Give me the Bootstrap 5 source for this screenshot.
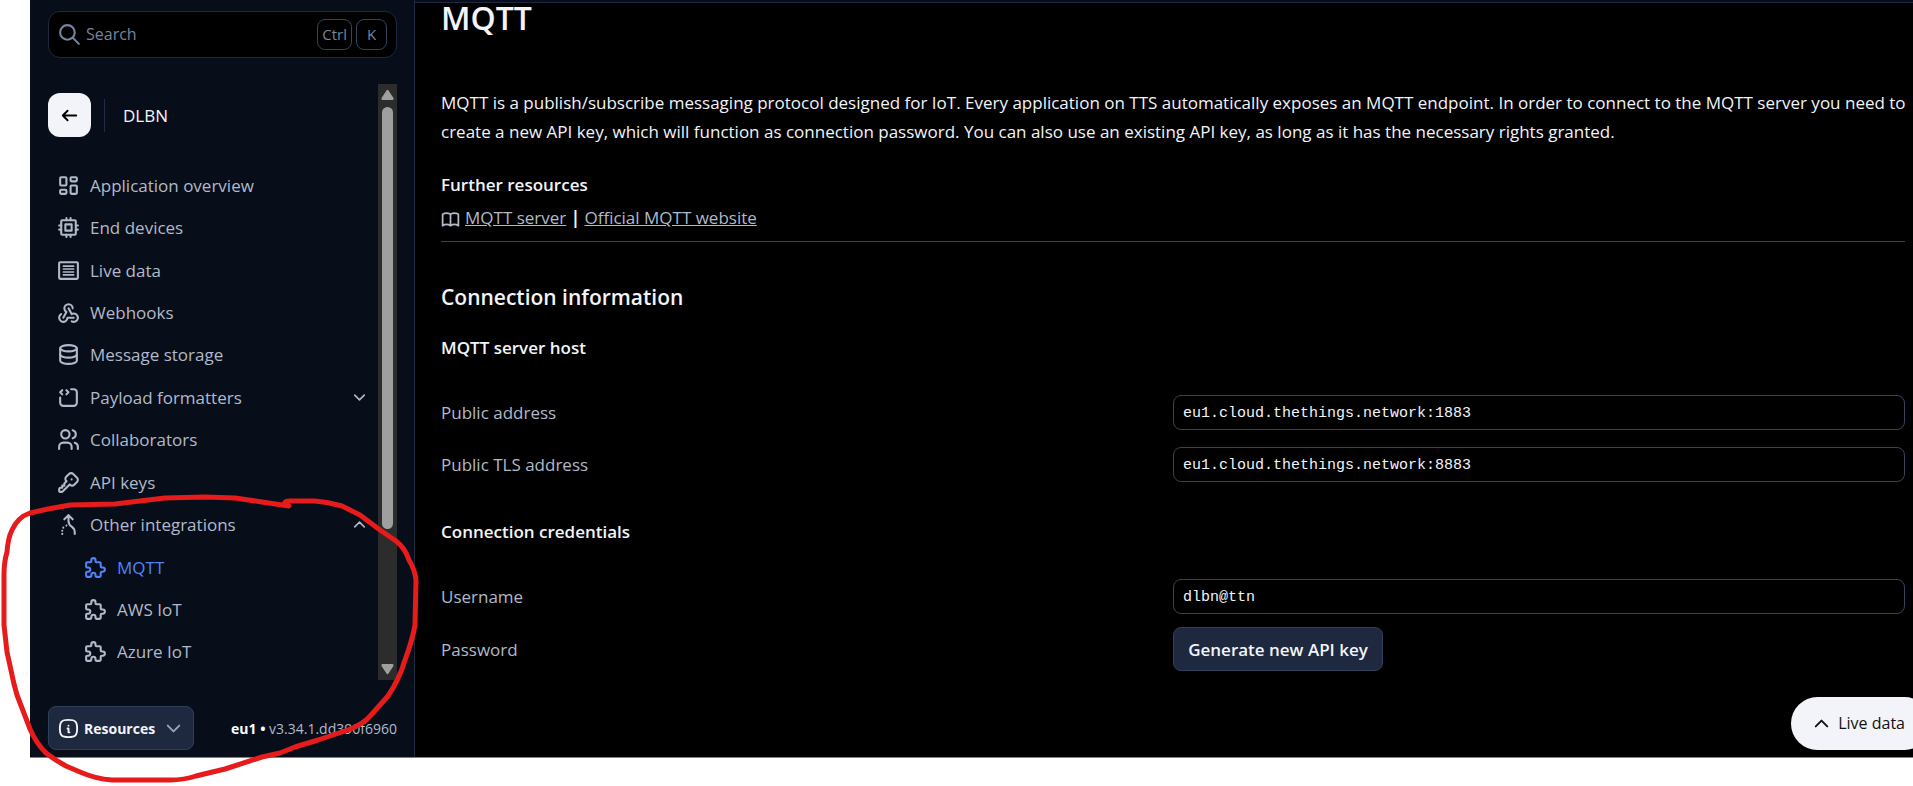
<!DOCTYPE html>
<html lang="en">
<head>
<meta charset="utf-8">
<meta name="viewport" content="width=device-width, initial-scale=1">
<title>MQTT - The Things Stack</title>
<link href="https://cdn.jsdelivr.net/npm/bootstrap@5.3.0/dist/css/bootstrap.min.css" rel="stylesheet">
<style>
  :root { --line: #1e293f; --line-strong: #33435c; --panel: #080e19; --soft: #b1b9ca; --bright: #f2f4f9; }
  body { font-family: "Open Sans", "Noto Sans", sans-serif; font-size: 17px; line-height: 29px; background: #fff; color: var(--bright); overflow-x: hidden; }
  svg { fill: none; stroke: currentColor; stroke-width: 2; stroke-linecap: round; stroke-linejoin: round; flex: none; }
  .ic { width: 25px; height: 25px; }
  .ic-sm { width: 19px; height: 19px; }
  .ic-md { width: 23px; height: 23px; }
  .frame { margin-left: 30px; height: calc(100vh - 28px); background: #000; border-bottom: 1px solid #808080; }
  .side { width: 385px; background: var(--panel); border-right: 1px solid var(--line); padding: 11px 17px 7px 18px; }
  .search { height: 47px; background: #000; border: 1px solid var(--line); border-radius: 12px; padding: 0 9px 0 8px; color: #76849f; }
  .search input { background: none; border: 0; outline: 0; color: inherit; padding: 0; font-size: 16px; min-width: 0; }
  .search input::placeholder { color: inherit; opacity: 1; }
  .search kbd { background: none; border: 1px solid var(--line-strong); border-radius: 8px; height: 31px; min-width: 31px; padding: 0 4px; font: 15px/29px "Open Sans", sans-serif; color: inherit; text-align: center; }
  .scroller { margin: 26px 0; }
  .back { width: 43px; height: 44px; border: 0; border-radius: 12px; background: var(--bright); color: #000; }
  .rule { width: 1px; height: 33px; background: #222c48; margin: 0 18px 0 13px; }
  .crumb { padding-top: 9px; margin-bottom: 27px; }
  .track { width: 19px; background: #2c2c2c; color: #9f9f9f; padding: 5px 0; }
  .track svg { width: 13px; height: 11px; stroke: none; fill: currentColor; }
  .thumb { width: 11px; border-radius: 6px; background: #9f9f9f; margin-top: 7px; height: 72%; }
  .menu { padding: 0 0 7px 8px; }
  .menu ul { padding: 0; margin: 0; list-style: none; }
  .menu li { flex: 1 1 0; }
  .menu li.group { flex-grow: 4; }
  .menu a { flex: 1 1 0; color: var(--soft); text-decoration: none; gap: 9px; padding-right: 9px; }
  .menu .group ul { flex: 3 1 0; padding-left: 27px; }
  .menu a.active { color: #4f83fb; }
  .solid { height: 44px; background: #1e293f; border: 1px solid #2f405c; border-radius: 8px; color: var(--bright); font-weight: 600; }
  .res { width: 146px; padding: 0 8px; font-size: 14px; font-weight: 700; }
  .ver { font-size: 14px; color: var(--soft); }
  .ver b { color: #fff; font-weight: 700; }
  .topbar { height: 3px; background: var(--panel); border-bottom: 1px solid var(--line); }
  .body-pad { padding: 0 8px 0 26px; }
  h1 { font-size: 32px; line-height: 30px; font-weight: 600; margin: 0 0 55px; }
  h2 { font-size: 21px; line-height: 28px; font-weight: 600; margin: 41px 0 22px; }
  h3 { font-size: 17px; line-height: 29px; font-weight: 600; margin: 0; }
  .intro { margin: 0 -8px 24px 0; }
  .links { margin-top: 4px; padding-bottom: 9px; border-bottom: 1px solid var(--line-strong); }
  .links a, .fields label, .fields .name { color: var(--soft); }
  .links .ic-sm { width: 21px; height: 21px; margin: 0 4px 0 -1px; }
  .fields { margin: 33px 0 35px; }
  .fields .row + .row { margin-top: 17px; }
  .fields .row.tight { margin-top: 13px; }
  .copy { width: 100%; height: 35px; background: #000; border: 1px solid var(--line-strong); border-radius: 8px; color: var(--bright); padding: 2px 9px 0; font: 15px "Liberation Mono", monospace; }
  .gen { width: 210px; }
  .live { right: -18px; bottom: 7px; height: 53px; border: 0; border-radius: 27px; background: var(--bright); color: #111; padding: 0 26px 0 19px; gap: 5px; font-size: 16px; }
  .pen { left: 0; top: 0; color: #e61b1b; pointer-events: none; }
</style>
</head>
<body>
<div class="frame d-flex position-relative">
  <aside class="side d-flex flex-column flex-shrink-0">
    <div class="search d-flex align-items-center">
      <svg class="ic" viewBox="0 0 24 24"><circle cx="10" cy="10" r="7"/><path d="M21 21l-6-6"/></svg>
      <input class="flex-grow-1 ms-1" type="text" placeholder="Search" aria-label="Search">
      <kbd>Ctrl</kbd><kbd class="ms-1">K</kbd>
    </div>

    <div class="scroller d-flex flex-grow-1">
      <div class="d-flex flex-column flex-grow-1">
        <div class="crumb d-flex align-items-center">
          <button class="back d-flex align-items-center justify-content-center p-0" type="button" aria-label="Back">
            <svg class="ic-md" viewBox="0 0 24 24"><path d="M5 12h14M5 12l5 5M5 12l5-5"/></svg>
          </button>
          <span class="rule"></span><span>DLBN</span>
        </div>
        <nav class="menu d-flex flex-grow-1">
          <ul class="d-flex flex-column flex-grow-1">
            <li class="d-flex"><a class="d-flex align-items-center" href="#"><svg class="ic" viewBox="0 0 24 24"><rect x="4" y="4" width="6" height="8" rx="1"/><rect x="4" y="16" width="6" height="4" rx="1"/><rect x="14" y="12" width="6" height="8" rx="1"/><rect x="14" y="4" width="6" height="4" rx="1"/></svg>Application overview</a></li>
            <li class="d-flex"><a class="d-flex align-items-center" href="#"><svg class="ic" viewBox="0 0 24 24"><rect x="5" y="5" width="14" height="14" rx="1"/><path d="M9 9h6v6H9zM3 10h2M3 14h2M10 3v2M14 3v2M21 10h-2M21 14h-2M14 21v-2M10 21v-2"/></svg>End devices</a></li>
            <li class="d-flex"><a class="d-flex align-items-center" href="#"><svg class="ic" viewBox="0 0 24 24"><rect x="3" y="4" width="18" height="16" rx="1"/><path d="M7 7.800h10M7 10.600h10M7 13.400h10M7 16.200h10" stroke-width="1.500"/></svg>Live data</a></li>
            <li class="d-flex"><a class="d-flex align-items-center" href="#"><svg class="ic" viewBox="0 0 24 24"><path d="M4.876 13.610a4 4 0 1 0 6.124 3.390h6"/><path d="M15.066 20.502a4 4 0 1 0 1.934-7.502c-.706 0-1.424.179-2 .5l-3-5.500"/><path d="M16 8a4 4 0 1 0-8 0c0 1.506.770 2.818 2 3.500l-3 5.500"/></svg>Webhooks</a></li>
            <li class="d-flex"><a class="d-flex align-items-center" href="#"><svg class="ic" viewBox="0 0 24 24"><ellipse cx="12" cy="6" rx="8" ry="3"/><path d="M4 6v6a8 3 0 0 0 16 0V6"/><path d="M4 12v6a8 3 0 0 0 16 0v-6"/></svg>Message storage</a></li>
            <li class="d-flex"><a class="d-flex align-items-center" href="#"><svg class="ic" viewBox="0 0 24 24"><path d="M14.500 4h2.500a3 3 0 0 1 3 3v10a3 3 0 0 1-3 3H7a3 3 0 0 1-3-3v-5"/><path d="M6 5L4 7l2 2M10 9l2-2l-2-2"/></svg>Payload formatters<svg class="ic-sm ms-auto" viewBox="0 0 24 24"><path d="M6 9l6 6l6-6"/></svg></a></li>
            <li class="d-flex"><a class="d-flex align-items-center" href="#"><svg class="ic" viewBox="0 0 24 24"><circle cx="9" cy="7" r="4"/><path d="M3 21v-2a4 4 0 0 1 4-4h4a4 4 0 0 1 4 4v2M16 3.130a4 4 0 0 1 0 7.750M21 21v-2a4 4 0 0 0-3-3.850"/></svg>Collaborators</a></li>
            <li class="d-flex"><a class="d-flex align-items-center" href="#"><svg class="ic" viewBox="0 0 24 24"><path d="M16.555 3.843l3.602 3.602a2.877 2.877 0 0 1 0 4.069l-2.643 2.643a2.877 2.877 0 0 1-4.069 0l-.301-.301l-6.558 6.558a2 2 0 0 1-1.239.578l-.175.008H4a1 1 0 0 1-.993-.883L3 20v-1.172a2 2 0 0 1 .467-1.284l.119-.130L4 17h2v-2h2v-2l2.144-2.144l-.301-.301a2.877 2.877 0 0 1 0-4.069l2.643-2.643a2.877 2.877 0 0 1 4.069 0zM15 9h.01"/></svg>API keys</a></li>
            <li class="group d-flex flex-column">
              <a class="d-flex align-items-center" href="#"><svg class="ic" viewBox="0 0 24 24"><path d="M16 7l-4-4l-4 4M6 21v.01M6 18.010v.01M7 15.020v.01M10 13.030v.01M12 3v5.394a6.737 6.737 0 0 0 3 5.606a6.737 6.737 0 0 1 3 5.606V21"/></svg>Other integrations<svg class="ic-sm ms-auto" viewBox="0 0 24 24"><path d="M6 15l6-6l6 6"/></svg></a>
              <ul class="d-flex flex-column">
                <li class="d-flex"><a class="active d-flex align-items-center" href="#"><svg class="ic" viewBox="0 0 24 24"><path id="puzzle" d="M4 7h3a1 1 0 0 0 1-1V5a2 2 0 0 1 4 0v1a1 1 0 0 0 1 1h3a1 1 0 0 1 1 1v3a1 1 0 0 0 1 1h1a2 2 0 0 1 0 4h-1a1 1 0 0 0-1 1v3a1 1 0 0 1-1 1h-3a1 1 0 0 1-1-1v-1a2 2 0 0 0-4 0v1a1 1 0 0 1-1 1H4a1 1 0 0 1-1-1v-3a1 1 0 0 1 1-1h1a2 2 0 0 0 0-4H4a1 1 0 0 1-1-1V8a1 1 0 0 1 1-1"/></svg>MQTT</a></li>
                <li class="d-flex"><a class="d-flex align-items-center" href="#"><svg class="ic" viewBox="0 0 24 24"><use href="#puzzle"/></svg>AWS IoT</a></li>
                <li class="d-flex"><a class="d-flex align-items-center" href="#"><svg class="ic" viewBox="0 0 24 24"><use href="#puzzle"/></svg>Azure IoT</a></li>
              </ul>
            </li>
          </ul>
        </nav>
      </div>
      <div class="track d-flex flex-column align-items-center" aria-hidden="true">
        <svg viewBox="0 0 13 11"><path d="M5.500 1.500q1-1.500 2 0L12.500 9q.5 2-1 2h-10q-1.500 0-1-2z"/></svg>
        <div class="thumb"></div>
        <svg class="mt-auto" viewBox="0 0 13 11"><path d="M5.500 9.500q1 1.500 2 0L12.500 2q.5-2-1-2h-10Q0 0 .5 2z"/></svg>
      </div>
    </div>

    <div class="d-flex align-items-center justify-content-between">
      <button class="solid res d-flex align-items-center" type="button">
        <svg class="ic-md" viewBox="0 0 24 24"><path d="M12 9h.01M11 12h1v4h1M12 3c7.200 0 9 1.800 9 9s-1.800 9-9 9s-9-1.800-9-9s1.800-9 9-9z"/></svg>
        <span class="ms-1">Resources</span>
        <svg class="ic-md ms-auto" viewBox="0 0 24 24" opacity=".6"><path d="M6 9l6 6l6-6"/></svg>
      </button>
      <span class="ver"><b>eu1 •</b> v3.34.1.dd390f6960</span>
    </div>
  </aside>

  <div class="flex-grow-1 position-relative">
    <div class="topbar"></div>
    <main class="body-pad">
      <h1>MQTT</h1>
      <p class="intro">MQTT is a publish/subscribe messaging protocol designed for IoT. Every application on TTS automatically exposes an MQTT endpoint. In order to connect to the MQTT server you need to create a new API key, which will function as connection password. You can also use an existing API key, as long as it has the necessary rights granted.</p>
      <h3>Further resources</h3>
      <div class="links">
        <svg class="ic-sm" viewBox="0 0 24 24" color="#b1b9ca"><path d="M3 19a9 9 0 0 1 9 0a9 9 0 0 1 9 0M3 6a9 9 0 0 1 9 0a9 9 0 0 1 9 0M3 6v13M12 6v13M21 6v13"/></svg><a href="#">MQTT server</a> <b>|</b> <a href="#">Official MQTT website</a>
      </div>

      <h2>Connection information</h2>
      <h3>MQTT server host</h3>
      <div class="fields">
        <div class="row g-0 align-items-center"><label class="col-6" for="addr">Public address</label><div class="col-6 d-flex"><input class="copy" id="addr" type="text" readonly value="eu1.cloud.thethings.network:1883"></div></div>
        <div class="row g-0 align-items-center"><label class="col-6" for="tls">Public TLS address</label><div class="col-6 d-flex"><input class="copy" id="tls" type="text" readonly value="eu1.cloud.thethings.network:8883"></div></div>
      </div>
      <h3>Connection credentials</h3>
      <div class="fields">
        <div class="row g-0 align-items-center"><label class="col-6" for="user">Username</label><div class="col-6 d-flex"><input class="copy" id="user" type="text" readonly value="dlbn@ttn"></div></div>
        <div class="row g-0 align-items-center tight"><div class="col-6 name">Password</div><div class="col-6"><button class="solid gen p-0" type="button">Generate new API key</button></div></div>
      </div>
    </main>
    <button class="live position-absolute d-flex align-items-center" type="button">
      <svg class="ic-md" viewBox="0 0 24 24"><path d="M6 15l6-6l6 6"/></svg>Live data
    </button>
  </div>
</div>

<!-- hand-drawn loop round the integrations group -->
<svg class="pen position-absolute" width="430" height="786" viewBox="0 0 430 786" aria-hidden="true">
  <path stroke-width="5" d="M289 506L282 505L262 502L235 498L205 497L165 498L140 501L115 504L70 505L48 509L30 513Q18 517 12 530Q8 538 7 552Q4 562 4 575L4 625L7 652L14 684L17 695L30 729Q36 743 46 753Q55 760 66 766L80 772Q96 779 112 780L170 780Q184 780 196 776L225 769L262 757L280 753L295 747L318 740L348 730Q364 724 372 714L388 696Q399 680 405 660Q413 638 415 625L416 580Q415 570 409 560Q405 548 396 541L380 530L360 515L342 506Q328 502 315 501L290 501Q284 501 285 504"/>
</svg>
<script src="https://cdn.jsdelivr.net/npm/bootstrap@5.3.0/dist/js/bootstrap.bundle.min.js"></script>
</body>
</html>
